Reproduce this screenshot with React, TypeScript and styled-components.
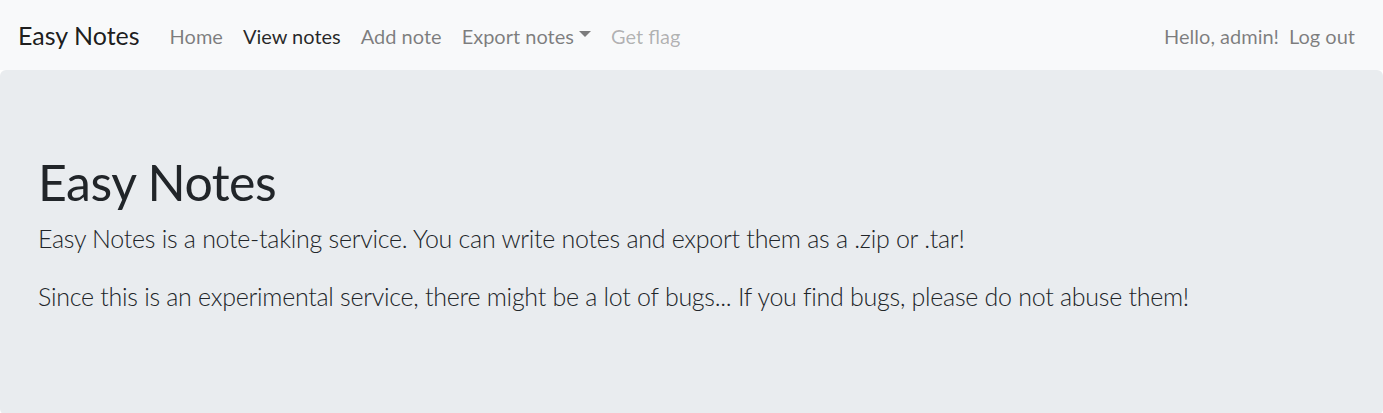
import styled, { createGlobalStyle } from 'styled-components';

const GlobalStyle = createGlobalStyle`
  html {
    font-size: 20px;
  }
  body {
    margin: 0;
    font-family: Lato, "Open Sans", "Liberation Sans", sans-serif;
    font-size: 1rem;
    line-height: 1.5;
    color: #212529;
    background: #fff;
  }
  * {
    box-sizing: border-box;
  }
`;

const Navbar = styled.nav`
  display: flex;
  align-items: center;
  height: 70px;
  padding: 0.5rem 0.9rem;
  background: #f8f9fa;
`;

const Brand = styled.a`
  font-size: 1.25rem;
  line-height: inherit;
  margin-right: 1rem;
  color: rgba(0, 0, 0, 0.9);
  text-decoration: none;
  white-space: nowrap;
  transform: translateY(1px);
`;

const NavList = styled.ul`
  display: flex;
  align-items: center;
  list-style: none;
  margin: 0;
  padding: 0;
`;

const Spacer = styled.div`
  flex: 1;
`;

const NavLink = styled.a<{ $state?: 'active' | 'disabled' }>`
  display: flex;
  align-items: center;
  padding: 0.5rem;
  text-decoration: none;
  white-space: nowrap;
  transform: translateY(1px);
  color: ${({ $state }) =>
    $state === 'active'
      ? 'rgba(0, 0, 0, 0.85)'
      : $state === 'disabled'
        ? 'rgba(0, 0, 0, 0.3)'
        : 'rgba(0, 0, 0, 0.5)'};
`;

const Caret = styled.span`
  display: inline-block;
  margin-left: 0.255em;
  border-top: 0.3em solid;
  border-right: 0.3em solid transparent;
  border-left: 0.3em solid transparent;
  border-bottom: 0;
  transform: translateY(-2px);
`;

const NavText = styled.span`
  color: rgba(0, 0, 0, 0.5);
  padding: 0.5rem 0;
  white-space: nowrap;
  transform: translateY(1px);
`;

const Jumbotron = styled.section`
  padding: 4rem 1.9rem;
  background: #e9ecef;
  border-radius: 0.3rem;
  min-height: 343px;
`;

const Heading = styled.h1`
  margin: 0 0 0.5rem;
  font-size: 2.5rem;
  font-weight: 400;
  line-height: 1.2;
  letter-spacing: -0.01em;
  transform: translateY(2px);
`;

const Lead = styled.p`
  margin: 0 0 1rem;
  font-size: 1.25rem;
  font-weight: 300;
  letter-spacing: -0.011em;
`;

export default function App() {
  return (
    <>
      <GlobalStyle />
      <Navbar>
        <Brand href="#">Easy Notes</Brand>
        <NavList>
          <li><NavLink href="#">Home</NavLink></li>
          <li><NavLink href="#" $state="active">View notes</NavLink></li>
          <li><NavLink href="#">Add note</NavLink></li>
          <li>
            <NavLink href="#">
              Export notes
              <Caret />
            </NavLink>
          </li>
          <li><NavLink href="#" $state="disabled">Get flag</NavLink></li>
        </NavList>
        <Spacer />
        <NavText>Hello, admin!</NavText>
        <NavList>
          <li><NavLink href="#">Log out</NavLink></li>
        </NavList>
      </Navbar>
      <Jumbotron>
        <Heading>Easy Notes</Heading>
        <Lead>
          Easy Notes is a note-taking service. You can write notes and export them as a .zip or .tar!
        </Lead>
        <Lead>
          Since this is an experimental service, there might be a lot of bugs... If you find bugs, please do not abuse them!
        </Lead>
      </Jumbotron>
    </>
  );
}
